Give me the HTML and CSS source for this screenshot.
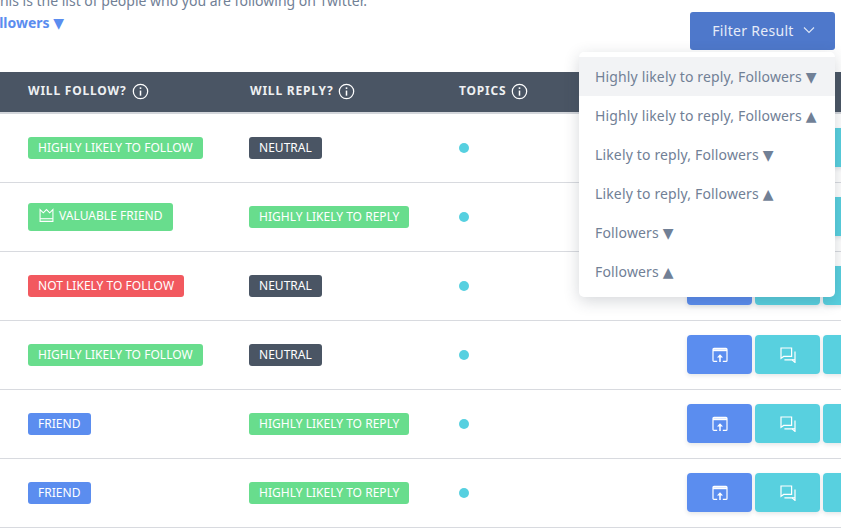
FILE: index.html
```html
<!DOCTYPE html>
<html lang="en">
  <head>
    <meta charset="UTF-8" />
    <meta name="viewport" content="width=device-width, initial-scale=1.0" />
    <title>Following</title>
    <link rel="stylesheet" href="styles.css">
  </head>
  <body>
    <svg class="sprites" width="0" height="0">
      <symbol id="i-info" viewBox="0 0 18 18">
        <g fill="none" stroke="#fff" stroke-width="1.3"><circle cx="9" cy="9" r="7.6" /><path d="M9 8v5.4" stroke-width="1.6" /><path d="M9 4.6v1.7" stroke-width="1.7" /></g>
      </symbol>
      <symbol id="i-share" viewBox="0 0 16 16">
        <g fill="none" stroke="#fff" stroke-width="1.2"><path d="M5.2 14.4H2a1 1 0 0 1-1-1V2.4a1 1 0 0 1 1-1h12a1 1 0 0 1 1 1v11a1 1 0 0 1-1 1h-3.2" /><path d="M1 3.2h14" stroke-width="2" /><path d="M8 15V9" stroke-width="1.5" /></g>
        <path d="M8 7.2l3 3.2H5z" fill="#fff" />
      </symbol>
      <symbol id="i-chat" viewBox="0 0 16 16">
        <g fill="none" stroke="#fff" stroke-width="1.2"><path d="M1 1h10.6v8.4H3.6L1 11.4z" /><path d="M15 4.6V15.4l-3-2.6H4.4" /><path d="M12 12.8H15" /></g>
      </symbol>
    </svg>

    <div class="page">
      <div class="top">
        <div class="intro">
          <p class="intro-text">This is the list of people who you are following on Twitter.</p>
          <p class="intro-sort">Highly likely to reply, Followers <span class="tri">▼</span></p>
        </div>
        <div class="filter">
          <button class="filter-btn">
            Filter Result
            <svg width="12" height="8" viewBox="0 0 12 8" fill="none" stroke="#dfe7f7" stroke-width="1.1"><path d="M1 1.5l5 5 5-5" /></svg>
          </button>
          <ul class="filter-menu">
            <li class="active">Highly likely to reply, Followers <span class="tri">▼</span></li>
            <li>Highly likely to reply, Followers <span class="tri">▲</span></li>
            <li>Likely to reply, Followers <span class="tri">▼</span></li>
            <li>Likely to reply, Followers <span class="tri">▲</span></li>
            <li>Followers <span class="tri">▼</span></li>
            <li>Followers <span class="tri">▲</span></li>
          </ul>
        </div>
      </div>

      <div class="table-head">
        <div class="head-cell">WILL FOLLOW? <svg class="info"><use href="#i-info" /></svg></div>
        <div class="head-cell">WILL REPLY? <svg class="info"><use href="#i-info" /></svg></div>
        <div class="head-cell">TOPICS <svg class="info"><use href="#i-info" /></svg></div>
      </div>

      <div class="row">
        <div class="cell"><span class="badge green">HIGHLY LIKELY TO FOLLOW</span></div>
        <div class="cell"><span class="badge dark">NEUTRAL</span></div>
        <div class="cell"><span class="dot"></span></div>
        <div class="actions">
          <button class="act blue"><svg class="act-icon"><use href="#i-share" /></svg></button>
          <button class="act teal"><svg class="act-icon"><use href="#i-chat" /></svg></button>
          <button class="act teal"></button>
        </div>
      </div>
      <div class="row">
        <div class="cell"><span class="badge green tall">
          <svg class="crown" viewBox="0 0 14 14" fill="none" stroke="#fff" stroke-width="1"><path d="M1 1.5l3 3 3-3 3 3 3-3v11H1z" /><path d="M1 10h12" /></svg>
          VALUABLE FRIEND</span></div>
        <div class="cell"><span class="badge green">HIGHLY LIKELY TO REPLY</span></div>
        <div class="cell"><span class="dot"></span></div>
        <div class="actions">
          <button class="act blue"><svg class="act-icon"><use href="#i-share" /></svg></button>
          <button class="act teal"><svg class="act-icon"><use href="#i-chat" /></svg></button>
          <button class="act teal"></button>
        </div>
      </div>
      <div class="row">
        <div class="cell"><span class="badge red">NOT LIKELY TO FOLLOW</span></div>
        <div class="cell"><span class="badge dark">NEUTRAL</span></div>
        <div class="cell"><span class="dot"></span></div>
        <div class="actions">
          <button class="act blue"><svg class="act-icon"><use href="#i-share" /></svg></button>
          <button class="act teal"><svg class="act-icon"><use href="#i-chat" /></svg></button>
          <button class="act teal"></button>
        </div>
      </div>
      <div class="row">
        <div class="cell"><span class="badge green">HIGHLY LIKELY TO FOLLOW</span></div>
        <div class="cell"><span class="badge dark">NEUTRAL</span></div>
        <div class="cell"><span class="dot"></span></div>
        <div class="actions">
          <button class="act blue"><svg class="act-icon"><use href="#i-share" /></svg></button>
          <button class="act teal"><svg class="act-icon"><use href="#i-chat" /></svg></button>
          <button class="act teal"></button>
        </div>
      </div>
      <div class="row">
        <div class="cell"><span class="badge blue">FRIEND</span></div>
        <div class="cell"><span class="badge green">HIGHLY LIKELY TO REPLY</span></div>
        <div class="cell"><span class="dot"></span></div>
        <div class="actions">
          <button class="act blue"><svg class="act-icon"><use href="#i-share" /></svg></button>
          <button class="act teal"><svg class="act-icon"><use href="#i-chat" /></svg></button>
          <button class="act teal"></button>
        </div>
      </div>
      <div class="row">
        <div class="cell"><span class="badge blue">FRIEND</span></div>
        <div class="cell"><span class="badge green">HIGHLY LIKELY TO REPLY</span></div>
        <div class="cell"><span class="dot"></span></div>
        <div class="actions">
          <button class="act blue"><svg class="act-icon"><use href="#i-share" /></svg></button>
          <button class="act teal"><svg class="act-icon"><use href="#i-chat" /></svg></button>
          <button class="act teal"></button>
        </div>
      </div>
    </div>
  </body>
</html>
```

FILE: styles.css
```css
* {
  box-sizing: border-box;
  font-family: "Noto Sans", sans-serif;
}
html,
body {
  height: 100%;
  margin: 0;
  padding: 0;
  overflow: hidden;
  background-color: #fff;
}
.sprites {
  position: absolute;
}
.page {
  width: 841px;
  height: 531px;
  overflow: hidden;
}
.top {
  display: flex;
  justify-content: space-between;
  height: 72px;
}
.tri {
  font-family: "DejaVu Sans", sans-serif;
  font-weight: 400;
}
.intro {
  width: 367px;
  margin-top: -9px;
  display: flex;
  flex-direction: column;
  align-items: flex-end;
  white-space: nowrap;
}
.intro-text {
  margin: 0;
  height: 22px;
  line-height: 20px;
  font-size: 14px;
  color: #718096;
}
.intro-sort {
  margin: 0 303px 0 0;
  line-height: 20px;
  font-size: 14px;
  font-weight: 700;
  color: #5b8def;
}
.filter {
  position: relative;
  width: 145px;
  height: 38px;
  margin: 12px 6px 0 0;
}
.filter-btn {
  display: flex;
  align-items: center;
  justify-content: center;
  gap: 9px;
  width: 100%;
  height: 38px;
  padding: 0 0 2px 2px;
  border: none;
  border-radius: 3px;
  background-color: #4e78cb;
  color: #e6ecf8;
  font-size: 14px;
  letter-spacing: 0.3px;
}
.filter-menu {
  position: absolute;
  z-index: 10;
  top: 40px;
  right: 0;
  width: 256px;
  margin: 0;
  padding: 5px 0 6px;
  list-style: none;
  background-color: #fff;
  border-radius: 5px;
  box-shadow: 0 4px 16px rgba(45, 55, 72, 0.2);
}
.filter-menu li {
  height: 39px;
  line-height: 39px;
  padding-left: 16px;
  font-size: 14px;
  letter-spacing: 0.15px;
  color: #718096;
  white-space: nowrap;
}
.filter-menu li.active {
  background-color: #f2f3f5;
}
.table-head {
  display: grid;
  grid-template-columns: 222px 209px 1fr;
  align-items: center;
  height: 42px;
  padding: 0 0 4px 28px;
  background-color: #4a5564;
  border-bottom: 2px solid #d3d6db;
}
.head-cell {
  display: flex;
  align-items: center;
  gap: 5px;
  font-size: 12px;
  font-weight: 700;
  letter-spacing: 0.8px;
  color: #eef0f2;
}
.info {
  width: 17px;
  height: 17px;
  margin-top: 3px;
}
.row {
  display: grid;
  grid-template-columns: 221px 210px 228px auto;
  align-items: center;
  height: 69px;
  padding: 0 0 1px 28px;
  border-bottom: 1px solid #d8dadf;
}
.cell {
  display: flex;
  align-items: center;
}
.badge {
  display: inline-flex;
  align-items: center;
  gap: 5px;
  height: 22px;
  padding: 0 10px 1px;
  border-radius: 3px;
  font-size: 12px;
  letter-spacing: 0.03px;
  color: #fff;
  white-space: nowrap;
}
.badge.tall {
  height: 28px;
  padding: 0 10px 2px 11px;
}
.badge.green {
  background-color: #68dd8d;
}
.badge.dark {
  background-color: #4a5564;
}
.badge.red {
  background-color: #f2595f;
}
.badge.blue {
  background-color: #5b8def;
}
.crown {
  width: 15px;
  height: 15px;
}
.dot {
  display: block;
  width: 10px;
  height: 10px;
  border-radius: 50%;
  background-color: #56d0e0;
}
.actions {
  display: flex;
  gap: 3px;
}
.act {
  display: flex;
  align-items: center;
  justify-content: center;
  flex: none;
  width: 65px;
  height: 39px;
  padding: 0;
  border: none;
  border-radius: 4px;
  box-shadow: 0 2px 4px rgba(45, 55, 72, 0.12);
}
.act.blue {
  background-color: #5b8def;
}
.act.teal {
  background-color: #58d0df;
}
.act-icon {
  width: 16px;
  height: 16px;
}
```
